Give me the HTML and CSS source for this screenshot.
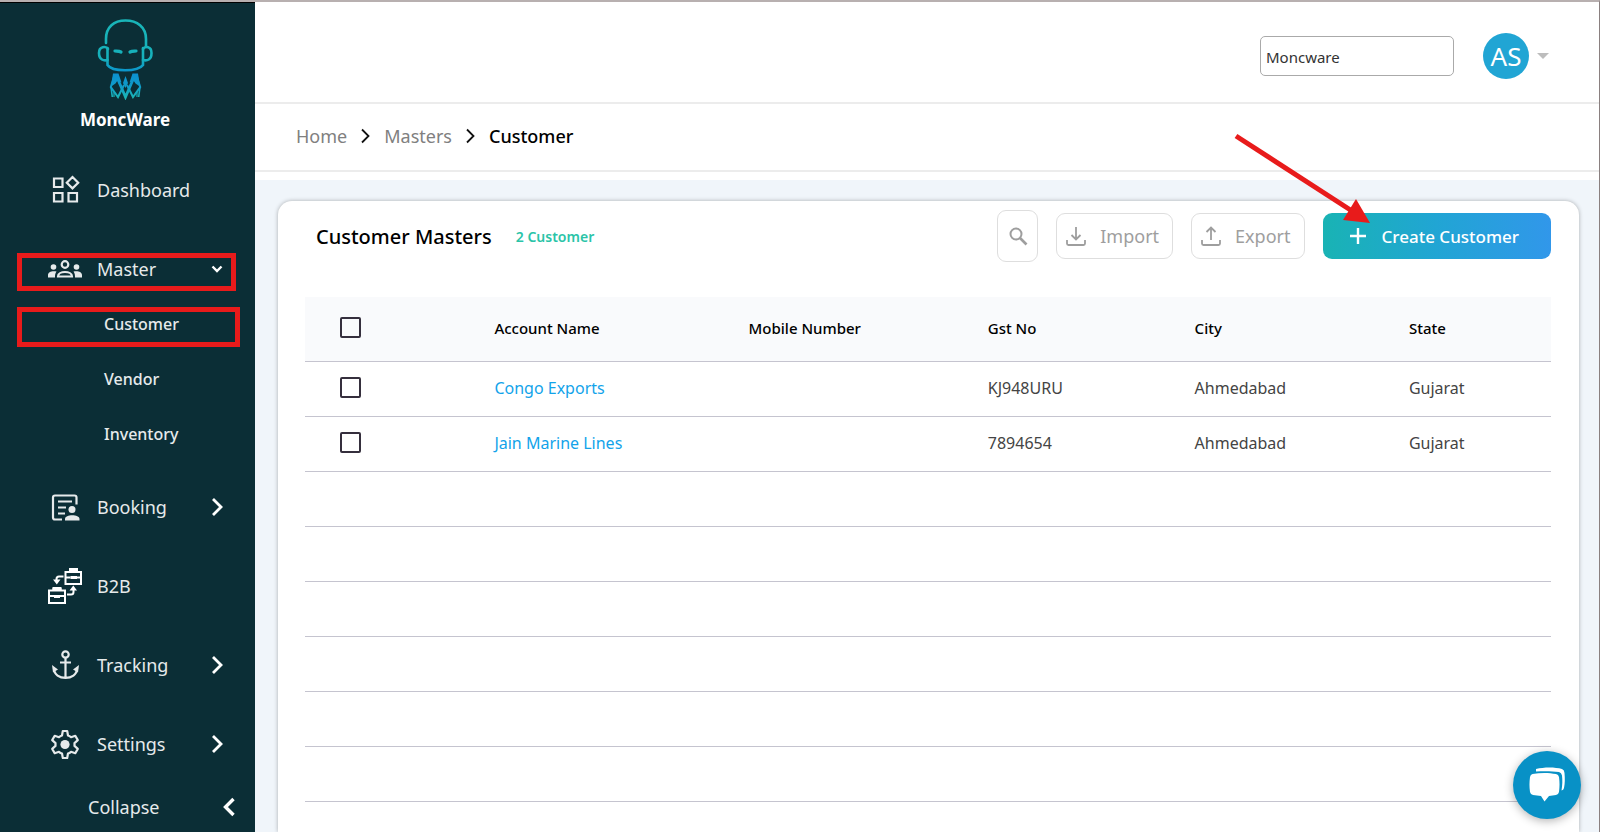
FILE: index.html
```html
<!DOCTYPE html>
<html lang="en">
<head>
<meta charset="utf-8">
<title>Customer Masters</title>
<link rel="stylesheet" href="styles.css">
</head>
<body>
<div class="app">
  <aside class="sidebar">
    <div class="brand">
      <svg class="brand-mark" viewBox="96 18 58 82" fill="none" aria-hidden="true">
        <defs>
          <linearGradient id="face" x1="0" y1="20" x2="0" y2="72" gradientUnits="userSpaceOnUse"><stop offset="0" stop-color="#19b5b8"/><stop offset=".75" stop-color="#16b0bb"/><stop offset="1" stop-color="#0a92cc"/></linearGradient>
          <linearGradient id="robe" x1="0" y1="73" x2="0" y2="99" gradientUnits="userSpaceOnUse"><stop offset="0" stop-color="#0b8fd0"/><stop offset=".5" stop-color="#0f9bc8"/><stop offset="1" stop-color="#1cb8b4"/></linearGradient>
        </defs>
        <g stroke="url(#face)" stroke-width="2.6" stroke-linecap="round">
          <path d="M106 43V39C106 27 114 20.500 125.500 20.500S146 27 146 39V47"/>
          <path d="M108 49C106 46 99 46 99 53C99 60 104 61 107.500 60"/>
          <path d="M143 49C145 46 151.500 46 151.500 53C151.500 60 147 61 143 60"/>
          <path d="M107.500 48V65C112 72 138 72 143 65V48"/>
          <path d="M115 51C117 51.200 119 51 121 52M136 51C134 51.200 132 51 130 52" stroke-width="3.200"/>
        </g>
        <g stroke="url(#robe)" stroke-width="2" stroke-linejoin="miter">
          <path d="M114.500 75L110.800 87L118 97L124 85M136.500 75L140.200 87L133 97L127 85"/>
          <path d="M111 87L112.300 97M140 87L138.700 97" stroke-width="1.600"/>
          <path d="M116 75L125.500 97L135 75" stroke-width="2.800"/>
          <path d="M114 92V97M137 92V97" stroke-width="1.200"/>
        </g>
        <path fill="url(#robe)" d="M113 73.500h5.500l3 9-4-2-2 3-4.500 3zM138 73.500h-5.500l-3 9 4-2 2 3 4.500 3zM125.500 76l2.500 7-2.500 5-2.500-5z"/>
      </svg>
      <div class="brand-name">MoncWare</div>
    </div>
    <nav class="menu">
      <a class="item" href="#dashboard">
        <svg class="icon" viewBox="0 0 34 34" fill="none" stroke="currentColor" stroke-width="2.200"><path d="M6 5.500h8.500V14H6zM6 20h8.500v8.500H6zM20.500 20H29v8.500h-8.500zM24.500 4l5.700 5.700-5.700 5.700-5.700-5.700z"/></svg>
        <span>Dashboard</span>
      </a>
      <a class="item" href="#master">
        <svg class="icon" viewBox="0 0 34 34" fill="currentColor"><circle cx="17" cy="12.500" r="3.300" fill="none" stroke="currentColor" stroke-width="2.200"/><path d="M10 24.500C10 18.500 24 18.500 24 24.500Z" fill="none" stroke="currentColor" stroke-width="2.200"/><circle cx="5.500" cy="15" r="2.800"/><circle cx="28.500" cy="15" r="2.800"/><path d="M0 25.500v-2.500c0-3 4-4.500 8.500-3.500-1.500 2-1.500 4-1.500 6zM34 25.500v-2.500c0-3-4-4.500-8.500-3.500 1.500 2 1.500 4 1.500 6z"/></svg>
        <span>Master</span>
        <svg class="chevron" viewBox="0 0 16 16" fill="none" stroke="currentColor" stroke-width="2.400"><path d="M3.500 5.500L8 10l4.500-4.500"/></svg>
        <i class="mark mark-master"></i>
      </a>
      <div class="submenu">
        <a class="subitem" href="#customer">Customer<i class="mark mark-customer"></i></a>
        <a class="subitem" href="#vendor">Vendor</a>
        <a class="subitem" href="#inventory">Inventory</a>
      </div>
      <a class="item" href="#booking">
        <svg class="icon" viewBox="0 0 34 34" fill="none" stroke="currentColor" stroke-width="2.200"><path d="M14 29.500H7A2 2 0 0 1 5 27.500V7.500A2 2 0 0 1 7 5.500h19.500A2 2 0 0 1 28.500 7.500v7M10 11.500h14M10 17.500h8M10 23.500h7"/><circle cx="24" cy="19.500" r="3.500" fill="currentColor" stroke="none"/><path d="M17 30.500v-1.500c0-5 14.500-5 14.500 0v1.500z" fill="currentColor" stroke="none"/></svg>
        <span>Booking</span>
        <svg class="chevron" viewBox="0 0 16 16" fill="none" stroke="currentColor" stroke-width="2.800"><path d="M4 0l8 8-8 8"/></svg>
      </a>
      <a class="item" href="#b2b">
        <svg class="icon icon-b2b" viewBox="1 0 34 37" fill="none" stroke="currentColor" stroke-width="2"><path d="M18.500 5H34v12H18.500zM23 5V2h7v3M18.500 10.500h5M34 10.500h-5M2 23.500h16V36H2zM6.500 24v-3h7v3M2 29h5M18 29h-5M16.500 9.500H12q-2.500 0-2.500 2.500v3M20 27.500h4q2.500 0 2.500-2.500V22"/><path d="M23.500 9h6.500v3h-6.500zM7 28h6v3H7zM6 12.500h7.500l-3.700 5zM22.500 23.500H30l-3.700-5zM22 2.500h9V5h-9zM5.500 21h9v2.500h-9z" fill="currentColor" stroke="none"/></svg>
        <span>B2B</span>
      </a>
      <a class="item" href="#tracking">
        <svg class="icon" viewBox="0 0 34 34" fill="none" stroke="currentColor" stroke-width="2.200"><circle cx="17.500" cy="6.500" r="3.200"/><path d="M17.500 9.500V30M12 14.500h11M6 20.500C6 33 29 33 29 20.500"/><path d="M4 17l6 4.500-5 3zM31 17l-6 4.500 5 3z" fill="currentColor" stroke="none"/></svg>
        <span>Tracking</span>
        <svg class="chevron" viewBox="0 0 16 16" fill="none" stroke="currentColor" stroke-width="2.800"><path d="M4 0l8 8-8 8"/></svg>
      </a>
      <a class="item" href="#settings">
        <svg class="icon" viewBox="0 0 34 34" fill="none" stroke="currentColor" stroke-width="2.200" stroke-linejoin="round"><path d="M14.800 4h4.400l.8 4.500q1.500.5 3 1.700l4.300-1.400 2.500 4.300-3.300 3v2.800l3.300 3-2.500 4.300-4.300-1.400q-1.500 1.200-3 1.700l-.8 4.500h-4.400l-.8-4.500q-1.500-.5-3-1.700l-4.300 1.400-2.500-4.300 3.300-3v-2.800l-3.300-3 2.500-4.300 4.300 1.400q1.500-1.200 3-1.700z"/><circle cx="17" cy="17.500" r="4.600" fill="currentColor" stroke="none"/></svg>
        <span>Settings</span>
        <svg class="chevron" viewBox="0 0 16 16" fill="none" stroke="currentColor" stroke-width="2.800"><path d="M4 0l8 8-8 8"/></svg>
      </a>
    </nav>
    <button class="collapse" type="button">
      <span>Collapse</span>
      <svg class="chevron" viewBox="0 0 16 16" fill="none" stroke="currentColor" stroke-width="3.400"><path d="M12.500 0l-8 8 8 8"/></svg>
    </button>
  </aside>

  <main class="main">
    <header class="topbar">
      <input class="company" type="text" value="Moncware" aria-label="Company">
      <button class="account" type="button">
        <span class="avatar">AS</span>
        <svg class="caret" viewBox="0 0 12 6" fill="#bdbdbd"><path d="M0 0h12L6 6z"/></svg>
      </button>
    </header>
    <nav class="crumbs" aria-label="Breadcrumb">
      <a href="#home">Home</a>
      <svg class="sep" viewBox="0 0 9 16" fill="none" stroke="#111" stroke-width="1.800"><path d="M1 1.500L7.500 8 1 14.500"/></svg>
      <a href="#masters">Masters</a>
      <svg class="sep" viewBox="0 0 9 16" fill="none" stroke="#111" stroke-width="1.800"><path d="M1 1.500L7.500 8 1 14.500"/></svg>
      <span class="current">Customer</span>
    </nav>
    <div class="content">
      <section class="card">
        <div class="toolbar">
          <h1 class="title">Customer Masters</h1>
          <span class="count">2 Customer</span>
          <div class="actions">
            <button class="btn btn-search" type="button" aria-label="Search">
              <svg viewBox="0 0 20 20" fill="none" stroke="currentColor" stroke-width="2"><circle cx="8" cy="8" r="5.500"/><path d="M12 12l6.500 6.500" stroke-width="2.600"/></svg>
            </button>
            <button class="btn" type="button">
              <svg viewBox="0 0 20 20" fill="none" stroke="currentColor" stroke-width="1.800"><path d="M10 1v12M5.500 9l4.500 4.500L14.500 9M1 14v3.500q0 1.500 1.500 1.500h15q1.500 0 1.500-1.500V14"/></svg>
              Import
            </button>
            <button class="btn" type="button">
              <svg viewBox="0 0 20 20" fill="none" stroke="currentColor" stroke-width="1.800"><path d="M10 14V1.500M5.500 6L10 1.500 14.500 6M1 14v3.500q0 1.500 1.500 1.500h15q1.500 0 1.500-1.500V14"/></svg>
              Export
            </button>
            <button class="btn btn-create" type="button">
              <svg viewBox="0 0 20 20" fill="none" stroke="currentColor" stroke-width="2.400"><path d="M10 2v16M2 10h16"/></svg>
              Create Customer
            </button>
          </div>
        </div>
        <table class="grid">
          <colgroup><col class="c-check"><col class="c-name"><col class="c-mobile"><col class="c-gst"><col class="c-city"><col class="c-state"></colgroup>
          <thead>
            <tr><th><input class="check" type="checkbox" aria-label="Select all"></th><th>Account Name</th><th>Mobile Number</th><th>Gst No</th><th>City</th><th>State</th></tr>
          </thead>
          <tbody>
            <tr><td><input class="check" type="checkbox" aria-label="Select Congo Exports"></td><td><a href="#congo">Congo Exports</a></td><td></td><td>KJ948URU</td><td>Ahmedabad</td><td>Gujarat</td></tr>
            <tr><td><input class="check" type="checkbox" aria-label="Select Jain Marine Lines"></td><td><a href="#jain">Jain Marine Lines</a></td><td></td><td>7894654</td><td>Ahmedabad</td><td>Gujarat</td></tr>
            <tr><td colspan="6"></td></tr>
            <tr><td colspan="6"></td></tr>
            <tr><td colspan="6"></td></tr>
            <tr><td colspan="6"></td></tr>
            <tr><td colspan="6"></td></tr>
            <tr><td colspan="6"></td></tr>
            <tr><td colspan="6"></td></tr>
          </tbody>
        </table>
      </section>
    </div>
  </main>

  <svg class="pointer" viewBox="0 0 140 92" aria-hidden="true"><path d="M4 4L120 79" stroke="#e81b1b" stroke-width="5"/><path d="M138 91L111 88 124 67z" fill="#e81b1b"/></svg>
  <button class="chat" type="button" aria-label="Open chat">
    <svg viewBox="0 0 36 36" fill="#fff"><path d="M7 2C15 0 26 0 33 2q2.500 1 2.500 4c.5 6 .5 10-.5 15q-.5 2-2.500 2.500c1-6 1-10 .5-15q-.5-3-3-3.500C23 4 14 4 7 4.500z"/><path d="M3.500 7C11 5.500 20 5.500 27 7q2.500.5 3 3c.7 6 .7 9 0 15q-.5 2.500-3 3l-7 1-4.500 5.500L12 29l-8-1q-2.500-.5-3-3c-.7-6-.7-9 0-15q.5-2.500 2.500-3z"/></svg>
  </button>
</div>
</body>
</html>
```

FILE: styles.css
```css
* { box-sizing: border-box; }

body {
  margin: 0;
  font-family: "Noto Sans", sans-serif;
  font-size: 15px;
  color: #000;
  background: #fff;
}

a { color: inherit; text-decoration: none; }
button { font: inherit; border: 0; padding: 0; background: none; cursor: pointer; }

.app {
  position: relative;
  display: flex;
  height: 100vh;
  overflow: hidden;
  border-top: 2px solid #b8b0b0;
  border-right: 1px solid #8a8080;
}

/* Sidebar */
.sidebar {
  flex: 0 0 255px;
  display: flex;
  flex-direction: column;
  color: #e6eaeb;
  background: #0b2e36;
  border-top: 1px solid #000;
}

.brand {
  display: flex;
  flex-direction: column;
  align-items: center;
  padding: 15px 5px 0 0;
  height: 159px;
}
.brand-mark { width: 58px; height: 82px; }
.brand-name { margin-top: 6px; font-size: 17px; line-height: 28px; font-weight: 700; color: #fff; }

.menu { display: flex; flex-direction: column; gap: 24px; }

.item {
  position: relative;
  display: flex;
  align-items: center;
  gap: 15px;
  height: 55px;
  padding: 0 30px 0 48px;
  font-size: 18px;
}
.icon { flex: none; width: 34px; height: 34px; }
.icon-b2b { height: 37px; color: #fff; }
.chevron { flex: none; width: 16px; height: 16px; margin-left: auto; color: #fff; overflow: visible; }

.submenu { margin: -24px 0 -6px; }
.subitem {
  position: relative;
  display: flex;
  align-items: center;
  height: 55px;
  padding-left: 104px;
  font-size: 16px;
  font-weight: 500;
}

.mark { position: absolute; left: 17px; border: 5px solid #e81b1b; }
.mark-master { top: 12px; width: 219px; height: 38px; }
.mark-customer { top: 11px; width: 223px; height: 40px; }

.collapse {
  display: flex;
  align-items: center;
  height: 48px;
  margin-top: 12px;
  padding: 0 18px 0 88px;
  font-size: 18px;
  color: inherit;
}

/* Header */
.main { flex: 1; min-width: 0; display: flex; flex-direction: column; }

.topbar {
  flex: none;
  display: flex;
  align-items: center;
  justify-content: flex-end;
  gap: 29px;
  height: 102px;
  padding: 8px 50px 0 0;
  border-bottom: 2px solid #ececec;
}
.company {
  width: 194px;
  height: 40px;
  padding: 2px 5px 0;
  font: inherit;
  color: #333;
  border: 1px solid #aaa;
  border-radius: 5px;
}
.account { display: flex; align-items: center; gap: 8px; }
.avatar {
  width: 46px;
  height: 46px;
  border-radius: 50%;
  font-size: 26px;
  line-height: 46px;
  text-align: center;
  color: #fff;
  background: #21a5d4;
}
.caret { width: 12px; height: 6px; }

.crumbs {
  flex: none;
  display: flex;
  align-items: center;
  gap: 14px;
  height: 68px;
  padding: 0 41px 2px;
  font-size: 18px;
  color: #808080;
  border-bottom: 2px solid #ececec;
}
.sep { width: 9px; height: 16px; }
.current { font-weight: 500; color: #000; }

/* Card */
.content {
  flex: 1;
  min-height: 0;
  padding: 21px 20px 0 23px;
  margin-top: 8px;
  background: #f0f5fa;
}
.card {
  height: 100%;
  padding: 0 28px 0 27px;
  background: #fff;
  border-radius: 14px 14px 0 0;
  box-shadow: 0 0 4px rgba(0, 0, 0, .3);
}
.toolbar { display: flex; align-items: center; height: 70px; padding-left: 11px; }
.title { margin: 0; font-size: 20px; font-weight: 500; }
.count { margin-left: 24px; font-size: 14px; font-weight: 600; color: #2bc4a8; }
.actions { display: flex; align-items: center; gap: 18px; margin-left: auto; }

.btn {
  display: flex;
  align-items: center;
  gap: 14px;
  height: 46px;
  padding: 0 13px 0 9px;
  font-size: 18px;
  color: #9e9e9e;
  border: 1px solid #dedede;
  border-radius: 9px;
}
.btn svg { flex: none; width: 20px; height: 20px; }
.btn-search { width: 41px; height: 52px; padding: 0 10px; }
.btn-create {
  padding: 0 32px 0 25px;
  font-size: 17px;
  font-weight: 500;
  color: #fff;
  border: 0;
  background: linear-gradient(90deg, #19b3b4, #21a5d4 50%, #3197ea);
}

/* Table */
.grid {
  width: 100%;
  margin-top: 26px;
  border-collapse: collapse;
  table-layout: fixed;
}
.c-check { width: 15.2%; }
.c-name { width: 20.4%; }
.c-mobile { width: 19.2%; }
.c-gst { width: 16.6%; }
.c-city { width: 17.2%; }
.c-state { width: 11.4%; }

.grid th, .grid td { height: 55px; padding: 0 0 2px; text-align: left; border-bottom: 1px solid #c5c4cf; }
.grid th { height: 64px; font-weight: 500; background: #f9fafc; }
.grid td { font-size: 16px; color: #444; }
.grid td a { color: #12a3ea; }

.check {
  appearance: none;
  display: block;
  width: 21px;
  height: 21px;
  margin: 0 0 0 35px;
  border: 2px solid #352f3d;
  border-radius: 2px;
}

/* Overlays */
.pointer { position: absolute; top: 130px; right: 227px; width: 140px; height: 92px; }
.chat {
  position: absolute;
  right: 18px;
  bottom: 13px;
  display: flex;
  align-items: center;
  justify-content: center;
  width: 68px;
  height: 68px;
  border-radius: 50%;
  background: #0891c6;
  box-shadow: 0 2px 10px rgba(0, 0, 0, .3);
}
.chat svg { width: 36px; height: 36px; }
```
